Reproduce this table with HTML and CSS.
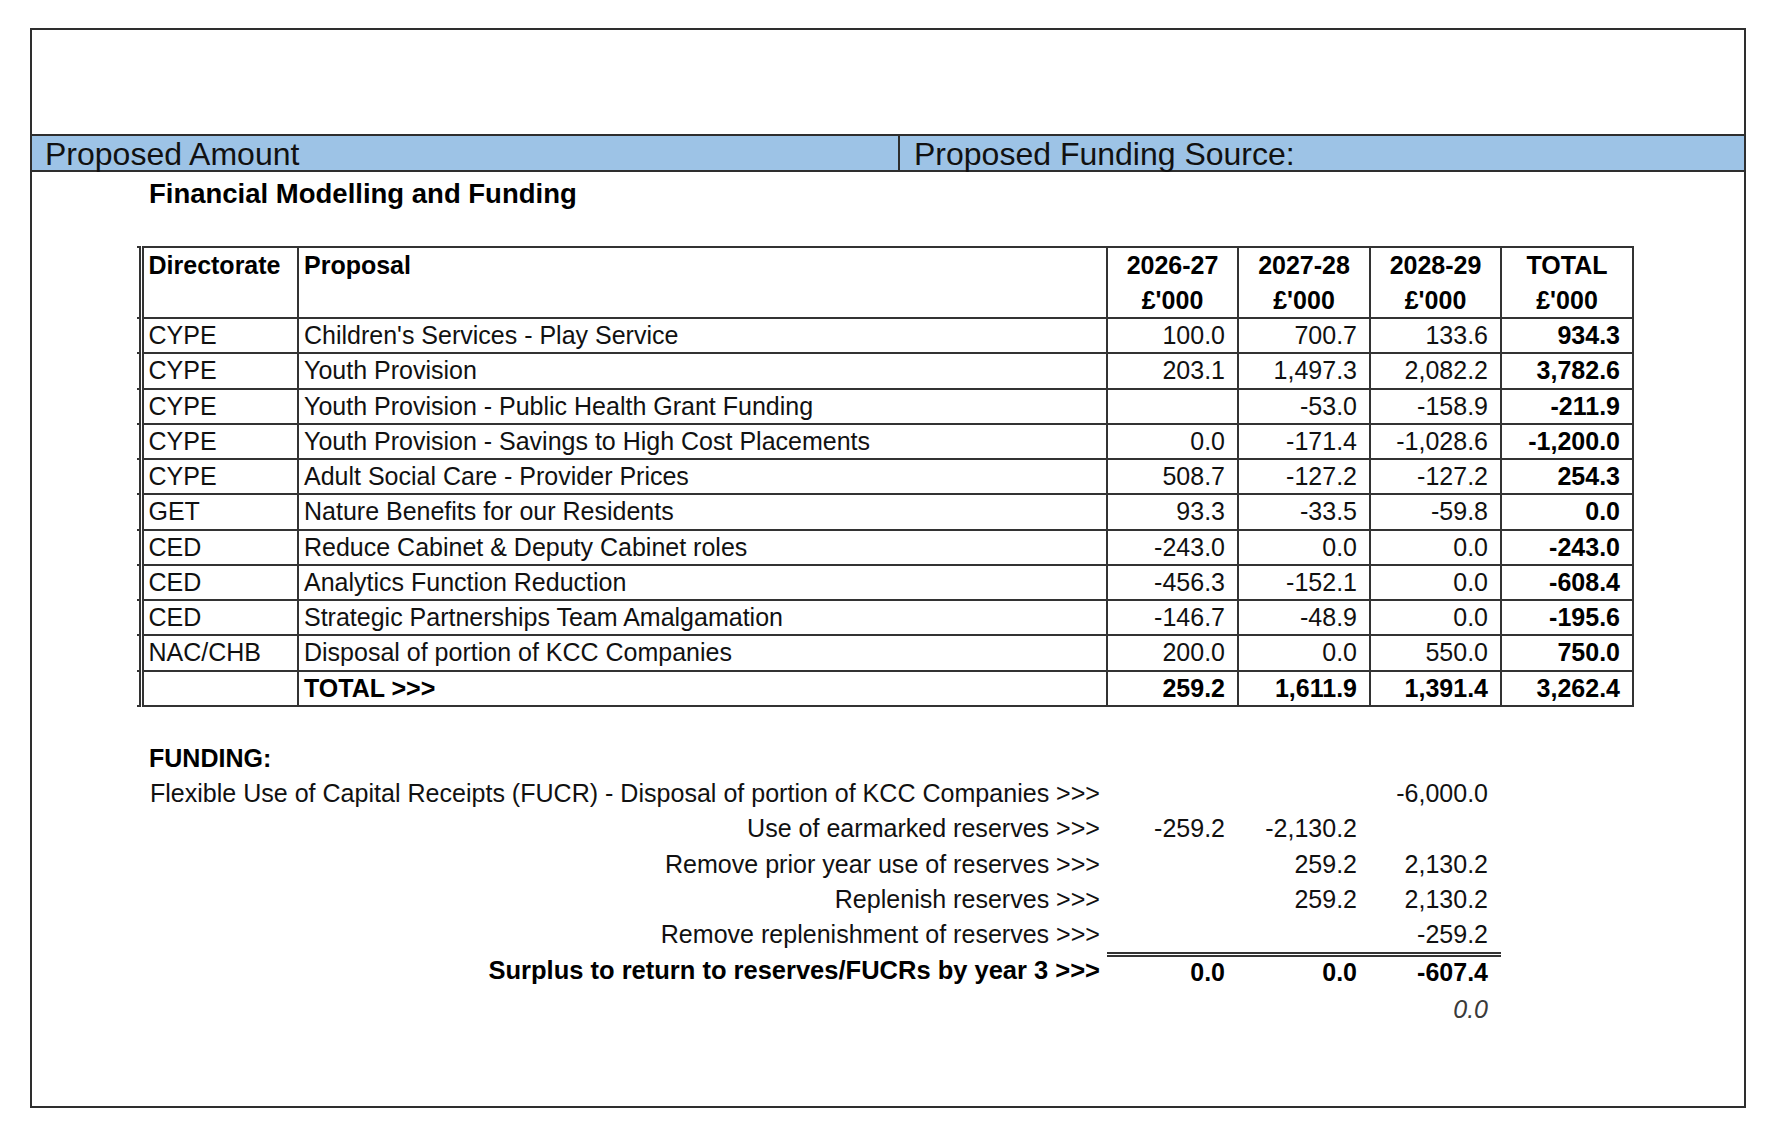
FILE: index.html
```html
<!DOCTYPE html>
<html lang="en">
<head>
<meta charset="utf-8">
<title>Financial Modelling and Funding</title>
<link rel="stylesheet" href="styles.css">
</head>
<body>
<div class="sheet">
  <div class="top-space"></div>
  <div class="band">
    <div class="band-cell band-left">Proposed Amount</div>
    <div class="band-cell band-right">Proposed Funding Source:</div>
  </div>
  <div class="content">
    <h2 class="heading">Financial Modelling and Funding</h2>
    <table class="grid">
      <colgroup>
        <col class="c-sp"><col class="c-dir"><col class="c-prop"><col class="c-y1"><col class="c-y2"><col class="c-y3"><col class="c-tot">
      </colgroup>
      <thead>
        <tr class="head-row">
          <td class="sp"></td>
          <th class="dir">Directorate</th>
          <th class="prop">Proposal</th>
          <th class="yr">2026-27<br>£'000</th>
          <th class="yr">2027-28<br>£'000</th>
          <th class="yr">2028-29<br>£'000</th>
          <th class="yr">TOTAL<br>£'000</th>
        </tr>
      </thead>
      <tbody>
        <tr><td class="sp"></td><td class="dir">CYPE</td><td class="prop">Children's Services - Play Service</td><td class="n">100.0</td><td class="n">700.7</td><td class="n">133.6</td><td class="n b">934.3</td></tr>
        <tr><td class="sp"></td><td class="dir">CYPE</td><td class="prop">Youth Provision</td><td class="n">203.1</td><td class="n">1,497.3</td><td class="n">2,082.2</td><td class="n b">3,782.6</td></tr>
        <tr><td class="sp"></td><td class="dir">CYPE</td><td class="prop">Youth Provision - Public Health Grant Funding</td><td class="n"></td><td class="n">-53.0</td><td class="n">-158.9</td><td class="n b">-211.9</td></tr>
        <tr><td class="sp"></td><td class="dir">CYPE</td><td class="prop">Youth Provision - Savings to High Cost Placements</td><td class="n">0.0</td><td class="n">-171.4</td><td class="n">-1,028.6</td><td class="n b">-1,200.0</td></tr>
        <tr><td class="sp"></td><td class="dir">CYPE</td><td class="prop">Adult Social Care - Provider Prices</td><td class="n">508.7</td><td class="n">-127.2</td><td class="n">-127.2</td><td class="n b">254.3</td></tr>
        <tr><td class="sp"></td><td class="dir">GET</td><td class="prop">Nature Benefits for our Residents</td><td class="n">93.3</td><td class="n">-33.5</td><td class="n">-59.8</td><td class="n b">0.0</td></tr>
        <tr><td class="sp"></td><td class="dir">CED</td><td class="prop">Reduce Cabinet &amp; Deputy Cabinet roles</td><td class="n">-243.0</td><td class="n">0.0</td><td class="n">0.0</td><td class="n b">-243.0</td></tr>
        <tr><td class="sp"></td><td class="dir">CED</td><td class="prop">Analytics Function Reduction</td><td class="n">-456.3</td><td class="n">-152.1</td><td class="n">0.0</td><td class="n b">-608.4</td></tr>
        <tr><td class="sp"></td><td class="dir">CED</td><td class="prop">Strategic Partnerships Team Amalgamation</td><td class="n">-146.7</td><td class="n">-48.9</td><td class="n">0.0</td><td class="n b">-195.6</td></tr>
        <tr><td class="sp"></td><td class="dir">NAC/CHB</td><td class="prop">Disposal of portion of KCC Companies</td><td class="n">200.0</td><td class="n">0.0</td><td class="n">550.0</td><td class="n b">750.0</td></tr>
        <tr class="total-row"><td class="sp"></td><td class="dir"></td><td class="prop b">TOTAL &gt;&gt;&gt;</td><td class="n b">259.2</td><td class="n b">1,611.9</td><td class="n b">1,391.4</td><td class="n b">3,262.4</td></tr>
      </tbody>
    </table>

    <table class="fund">
      <colgroup>
        <col class="c-sp"><col class="c-dir"><col class="c-prop"><col class="c-y1"><col class="c-y2"><col class="c-y3"><col class="c-tot">
      </colgroup>
      <tbody>
        <tr><td></td><td colspan="2" class="f-head">FUNDING:</td><td></td><td></td><td></td><td></td></tr>
        <tr><td></td><td colspan="2" class="f-label">Flexible Use of Capital Receipts (FUCR) - Disposal of portion of KCC Companies &gt;&gt;&gt;</td><td class="fn"></td><td class="fn"></td><td class="fn">-6,000.0</td><td></td></tr>
        <tr><td></td><td colspan="2" class="f-label">Use of earmarked reserves &gt;&gt;&gt;</td><td class="fn">-259.2</td><td class="fn">-2,130.2</td><td class="fn"></td><td></td></tr>
        <tr><td></td><td colspan="2" class="f-label">Remove prior year use of reserves &gt;&gt;&gt;</td><td class="fn"></td><td class="fn">259.2</td><td class="fn">2,130.2</td><td></td></tr>
        <tr><td></td><td colspan="2" class="f-label">Replenish reserves &gt;&gt;&gt;</td><td class="fn"></td><td class="fn">259.2</td><td class="fn">2,130.2</td><td></td></tr>
        <tr class="pre-surplus"><td></td><td colspan="2" class="f-label">Remove replenishment of reserves &gt;&gt;&gt;</td><td class="fn"></td><td class="fn"></td><td class="fn">-259.2</td><td></td></tr>
        <tr class="surplus"><td></td><td colspan="2" class="f-label">Surplus to return to reserves/FUCRs by year 3 &gt;&gt;&gt;</td><td class="fn dbl">0.0</td><td class="fn dbl">0.0</td><td class="fn dbl">-607.4</td><td></td></tr>
        <tr class="check"><td></td><td colspan="2"></td><td class="fn"></td><td class="fn"></td><td class="fn check-val">0.0</td><td></td></tr>
      </tbody>
    </table>
  </div>
</div>
</body>
</html>
```

FILE: styles.css
```css
* {
  box-sizing: border-box;
}

body {
  margin: 0;
  background: #ffffff;
  font-family: "Liberation Sans", Arial, sans-serif;
  color: #111111;
}

.sheet {
  margin: 28px 0 0 30px;
  width: 1716px;
  height: 1080px;
  border: 2px solid #2e2e2e;
}

.top-space {
  height: 104px;
}

.band {
  display: flex;
  height: 38px;
  background: #9dc3e6;
  border-top: 2px solid #2e2e2e;
  border-bottom: 2px solid #2e2e2e;
}

.band-cell {
  font-size: 32px;
  line-height: 34px;
  padding-top: 1px;
  white-space: nowrap;
  color: #111111;
}

.band-left {
  width: 868px;
  padding-left: 13px;
  border-right: 2px solid #2e2e2e;
}

.band-right {
  flex: 1;
  padding-left: 14px;
}

.heading {
  margin: 6px 0 0 117px;
  font-size: 27.5px;
  line-height: 32px;
  font-weight: bold;
  color: #000000;
}

.grid,
.fund {
  border-collapse: collapse;
  table-layout: fixed;
  width: 1496px;
  margin-left: 105px;
  font-size: 25px;
}

.grid {
  margin-top: 36px;
}

.fund {
  margin-top: 34px;
  font-size: 25.06px;
}

.c-sp { width: 4px; }
.c-dir { width: 157px; }
.c-prop { width: 809px; }
.c-y1 { width: 131px; }
.c-y2 { width: 132px; }
.c-y3 { width: 131px; }
.c-tot { width: 132px; }

.grid td,
.grid th {
  border: 2px solid #333333;
  height: 35.25px;
  padding: 0 5px;
  line-height: 31px;
  white-space: nowrap;
  overflow: hidden;
  font-weight: normal;
  text-align: left;
  vertical-align: middle;
}

.grid .sp {
  border-left: 0;
  border-right: 0;
  padding: 0;
}

.grid .dir {
  border-left: 5px double #333333;
  padding-left: 5px;
}

.grid th {
  font-weight: bold;
  color: #000000;
  vertical-align: top;
  line-height: 34.5px;
  height: auto;
}

.grid th.yr {
  text-align: center;
  padding: 0;
}

.grid .n {
  text-align: right;
  padding-right: 12px;
}

.grid .b {
  font-weight: bold;
  color: #000000;
}

.fund td {
  height: 35.25px;
  padding: 2px 0 0;
  line-height: 31px;
  white-space: nowrap;
  vertical-align: top;
}

.fund .f-head {
  font-weight: bold;
  color: #000000;
  padding-left: 8px;
  text-align: left;
  font-size: 25px;
}

.fund .f-label {
  text-align: right;
  padding-right: 7px;
}

.fund .fn {
  text-align: right;
  padding-right: 13px;
  font-size: 25px;
}

.fund .pre-surplus td {
  height: 37.75px;
}

.fund .surplus td {
  height: 36px;
  padding-top: 0;
  font-weight: bold;
  color: #000000;
}

.fund .surplus .f-label {
  font-size: 25.5px;
}

.fund .dbl {
  border-top: 5px double #333333;
}

.fund .check td {
  padding-top: 3px;
}

.fund .check-val {
  font-style: italic;
  color: #3a3a3a;
}
```
